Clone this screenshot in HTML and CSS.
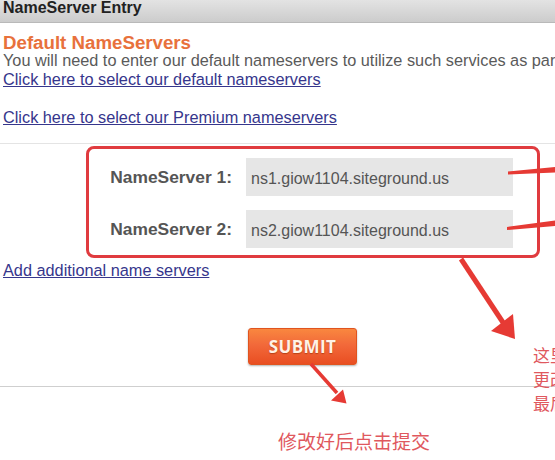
FILE: index.html
```html
<!DOCTYPE html>
<html lang="en">
<head>
<meta charset="utf-8">
<title>NameServer Entry</title>
<link rel="stylesheet" href="styles.css">
</head>
<body>
<div class="page">
  <header class="bar">NameServer Entry</header>
  <section class="intro">
    <h2 class="title">Default NameServers</h2>
    <p class="desc">You will need to enter our default nameservers to utilize such services as parking, email and web forwarding.</p>
    <p class="line"><a class="lnk" href="#">Click here to select our default nameservers</a></p>
    <p class="line gap"><a class="lnk" href="#">Click here to select our Premium nameservers</a></p>
  </section>
  <div class="sep"></div>
  <div class="nsbox">
    <label class="lbl" for="ns1">NameServer 1:</label>
    <input class="field" id="ns1" type="text" value="ns1.giow1104.siteground.us" readonly>
    <label class="lbl" for="ns2">NameServer 2:</label>
    <input class="field" id="ns2" type="text" value="ns2.giow1104.siteground.us" readonly>
  </div>
  <p class="line add"><a class="lnk" href="#">Add additional name servers</a></p>
  <div class="submit-row"><button class="submit" type="button">SUBMIT</button></div>
  <div class="sep2"></div>
  <p class="note">修改好后点击提交</p>

  <div class="side-note">
    <div>这里填写新的域名服务器</div>
    <div>更改为主机提供的地址</div>
    <div>最后保存</div>
  </div>

  <svg class="arrows" width="555" height="460" viewBox="0 0 555 460" aria-hidden="true">
    <polygon points="508,171.5 555,167 555,172.5 508,174.5" fill="#e63a34"/>
    <polygon points="507,227 555,220.5 555,226 507,230" fill="#e63a34"/>
    <line x1="461" y1="259" x2="504" y2="324" stroke="#e63a34" stroke-width="5"/>
    <polygon points="491,331 513,314 515,339" fill="#e63a34"/>
    <line x1="311" y1="364" x2="337" y2="393" stroke="#e63a34" stroke-width="3.5"/>
    <polygon points="331,400.5 343,389.5 346.5,403.5" fill="#e63a34"/>
  </svg>
</div>
</body>
</html>
```

FILE: styles.css
```css
html, body {
  margin: 0;
  padding: 0;
  overflow: hidden;
  background: #ffffff;
}

.page {
  position: relative;
  width: 555px;
  height: 460px;
  overflow: hidden;
  font-family: "Liberation Sans", Arial, sans-serif;
  color: #555555;
}

.bar {
  height: 22px;
  border-bottom: 1px solid #b9b9b9;
  background: linear-gradient(#e3e3e3, #cccccc);
  padding-left: 3px;
  font-size: 16px;
  font-weight: bold;
  line-height: 16px;
  color: #222222;
  white-space: nowrap;
}

.intro {
  padding-left: 3px;
}

.title {
  margin: 12px 0 0;
  font-size: 18.7px;
  line-height: 16px;
  font-weight: bold;
  color: #e8713c;
  white-space: nowrap;
}

.desc,
.line {
  margin: 0;
  font-size: 16.3px;
  line-height: 19px;
  white-space: nowrap;
}

.desc {
  color: #5a5a5a;
}

.line.gap {
  margin-top: 19px;
}

.lnk {
  color: #36368c;
  text-decoration: underline;
}

.sep {
  margin-top: 16px;
  height: 1px;
  background: #e4e4e4;
}

.nsbox {
  margin: 2px 0 0 86px;
  width: 454px;
  box-sizing: border-box;
  border: 3px solid #e03b3f;
  border-radius: 8px;
  padding: 9px 24px 7px 21px;
  display: grid;
  grid-template-columns: 122px 267px;
  column-gap: 14px;
  row-gap: 14px;
  align-items: center;
}

.lbl {
  justify-self: end;
  font-size: 17.4px;
  font-weight: bold;
  color: #555555;
  white-space: nowrap;
}

.field {
  height: 38px;
  width: 267px;
  box-sizing: border-box;
  border: none;
  outline: none;
  margin: 0;
  padding: 3px 5px 0;
  background: #e6e6e6;
  font-family: "Liberation Sans", Arial, sans-serif;
  font-size: 16px;
  color: #555555;
}

.line.add {
  margin-top: 3px;
  padding-left: 3px;
}

.submit-row {
  margin-top: 48px;
  padding-left: 248px;
}

.submit {
  display: block;
  width: 109px;
  height: 37px;
  margin: 0;
  padding: 0;
  border: 1px solid #e0541f;
  border-radius: 3px;
  background: linear-gradient(#f9873f 0%, #f2693a 45%, #e94e22 100%);
  box-shadow: 0 1px 2px rgba(0, 0, 0, 0.3);
  font-family: "Open Sans", "Liberation Sans", sans-serif;
  font-size: 17px;
  font-weight: bold;
  letter-spacing: 0.4px;
  color: #fff2e6;
  text-shadow: 0 1px 1px rgba(130, 40, 0, 0.5);
}

.sep2 {
  margin-top: 21px;
  height: 1px;
  background: #cfcfcf;
}

.note {
  margin: 42px 0 0 278px;
  font-family: "Noto Sans CJK SC", sans-serif;
  font-size: 19px;
  line-height: 24px;
  color: #e0585e;
  white-space: nowrap;
}

.side-note {
  position: absolute;
  left: 533px;
  top: 343px;
  font-family: "Noto Sans CJK SC", sans-serif;
  font-size: 17px;
  line-height: 24px;
  color: #e0585e;
  white-space: nowrap;
}

.arrows {
  position: absolute;
  left: 0;
  top: 0;
  pointer-events: none;
}
```
